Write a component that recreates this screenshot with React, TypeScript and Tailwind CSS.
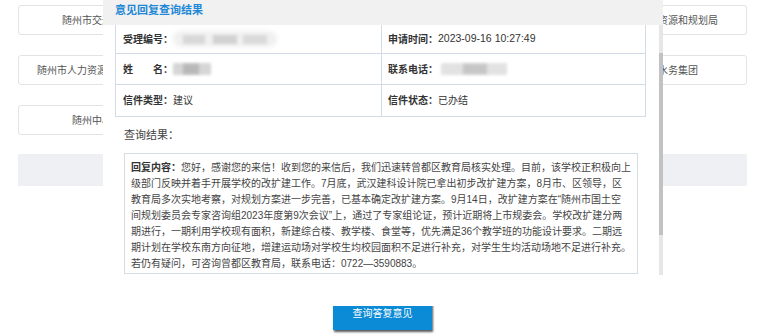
import React from "react";

const font = { fontFamily: '"Liberation Sans", "Noto Sans CJK SC", sans-serif' };

function Card({ text }: { text?: string }) {
  if (!text) return <div className="h-[30px]" />;
  return (
    <div className="h-[30px] rounded-[3px] border border-[#e3e3e3] bg-white flex items-center justify-center text-[10px] text-[#555] whitespace-nowrap">
      {text}
    </div>
  );
}

const lines = [
  "您好，感谢您的来信！收到您的来信后，我们迅速转曾都区教育局核实处理。目前，该学校正积极向上",
  "级部门反映并着手开展学校的改扩建工作。7月底，武汉建科设计院已拿出初步改扩建方案，8月市、区领导，区",
  "教育局多次实地考察，对规划方案进一步完善，已基本确定改扩建方案。9月14日，改扩建方案在“随州市国土空",
  "间规划委员会专家咨询组2023年度第9次会议”上，通过了专家组论证，预计近期将上市规委会。学校改扩建分两",
  "期进行，一期利用学校现有面积，新建综合楼、教学楼、食堂等，优先满足36个教学班的功能设计要求。二期远",
  "期计划在学校东南方向征地，增建运动场对学校生均校园面积不足进行补充，对学生生均活动场地不足进行补充。",
  "若仍有疑问，可咨询曾都区教育局，联系电话：0722—3590883。",
];

export default function App() {
  return (
    <div className="relative w-[760px] h-[334px] overflow-hidden bg-white" style={font}>
      {/* page layer */}
      <div className="pt-[5px] pl-[18px] pr-[13px]">
        <div className="grid grid-cols-4 gap-x-[19px] gap-y-[20px]">
          <Card text="随州市交通运输局" />
          <Card text="随州市住房和城乡建设局" />
          <Card text="随州市生态环境局" />
          <Card text="随州市自然资源和规划局" />
          <Card text="随州市人力资源和社会保障局" />
          <Card text="随州市市场监督管理局" />
          <Card text="随州市供电公司" />
          <Card text="随州市水务集团" />
          <Card text="随州中心医院" />
          <Card />
          <Card />
          <Card />
        </div>
        <div className="mt-[19px] h-[32px] bg-[#eef0f3]" />
        <div className="mt-[110px] flex justify-center">
          <div className="w-[99px] h-[34px] bg-[#0b8ad6] text-white text-[10px] flex items-center justify-center shadow-[1px_2px_2px_rgba(0,0,0,0.65)]">
            查询答复意见
          </div>
        </div>
      </div>

      {/* modal */}
      <div className="absolute top-0 left-[103px] w-[560px] h-[306px] bg-white flex flex-col">
        <div className="h-[25px] bg-[#f1f1f1] pl-[12px] flex items-center pb-[4px]">
          <span className="text-[11px] font-bold text-[#1e88d6] leading-none">意见回复查询结果</span>
        </div>
        <div className="flex h-[250px]">
          <div className="flex-1 text-[#333]">
            <div className="ml-[12px] mr-[13px] border-l border-r border-b border-[#d3dce6] text-[10px]">
              <div className="grid grid-cols-[266px_1fr] h-[29px] border-b border-[#d3dce6]">
                <div className="border-r border-[#d3dce6] pl-[7px] flex items-center">
                  <span className="font-bold">受理编号：</span>
                  <span className="relative w-[104px] h-[16px]">
                    <span className="absolute inset-0 rounded-full bg-[#f0f0f0] blur-[2px]" />
                    <span className="absolute left-[10px] top-[4px] w-[22px] h-[9px] bg-[#d8d8d8] blur-[1.5px]" />
                    <span className="absolute left-[40px] top-[4px] w-[24px] h-[9px] bg-[#d2d2d2] blur-[1.5px]" />
                    <span className="absolute left-[70px] top-[4px] w-[24px] h-[9px] bg-[#dadada] blur-[1.5px]" />
                  </span>
                </div>
                <div className="pl-[6px] flex items-center">
                  <span className="font-bold">申请时间：</span>
                  <span className="text-[10.5px]">2023-09-16 10:27:49</span>
                </div>
              </div>
              <div className="grid grid-cols-[266px_1fr] h-[31px] border-b border-[#d3dce6]">
                <div className="border-r border-[#d3dce6] pl-[7px] flex items-center">
                  <span className="font-bold">姓</span>
                  <span className="font-bold ml-[20px]">名：</span>
                  <span className="relative w-[38px] h-[12px]">
                    <span className="absolute inset-0 bg-[#d6d6d6] blur-[1.5px]" />
                    <span className="absolute left-[10px] top-[1px] w-[16px] h-[10px] bg-[#b8b8b8] blur-[1.5px]" />
                  </span>
                </div>
                <div className="pl-[6px] flex items-center">
                  <span className="font-bold">联系电话：</span>
                  <span className="relative ml-[3px] w-[66px] h-[12px]">
                    <span className="absolute inset-0 bg-[#e2e2e2] blur-[1.5px]" />
                    <span className="absolute left-[22px] top-[1px] w-[24px] h-[10px] bg-[#c6c6c6] blur-[1.5px]" />
                  </span>
                </div>
              </div>
              <div className="grid grid-cols-[266px_1fr] h-[31px]">
                <div className="border-r border-[#d3dce6] pl-[7px] flex items-center">
                  <span className="font-bold">信件类型：</span>
                  <span>建议</span>
                </div>
                <div className="pl-[6px] flex items-center">
                  <span className="font-bold">信件状态：</span>
                  <span>已办结</span>
                </div>
              </div>
            </div>
            <div className="ml-[21px] pt-[10px] mb-[10px] text-[11px] leading-[16px] text-[#444]">查询结果：</div>
            <div className="ml-[21px] w-[514px] border border-[#d5dce4] pl-[6px] pt-[6px] pb-[1px] text-[10px] leading-[16px] text-[#444]">
              {lines.map((l, i) => (
                <div key={i} className="whitespace-nowrap">
                  {i === 0 && <span className="font-bold text-[#333]">回复内容：</span>}
                  {l}
                </div>
              ))}
            </div>
          </div>
          <div className="w-[4px] h-[250px] bg-[#e6e6e6] flex flex-col">
            <div className="h-[28px]" />
            <div className="h-[182px] bg-[#c2c2c2]" />
          </div>
        </div>
      </div>
    </div>
  );
}
